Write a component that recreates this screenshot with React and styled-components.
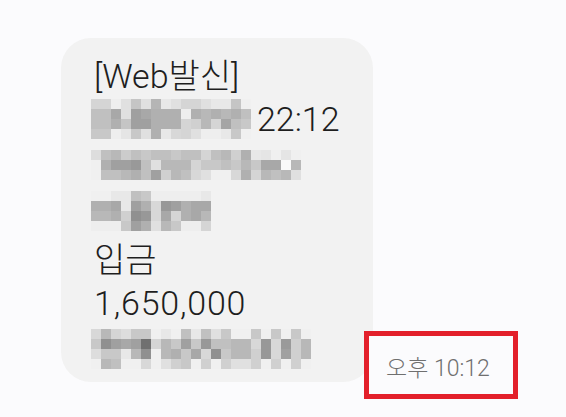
import React from "react";
import styled, { createGlobalStyle } from "styled-components";

const Global = createGlobalStyle`
  html, body { margin: 0; padding: 0; background: #fbfbfd; }
  body { font-family: "Roboto", "Noto Sans CJK KR", sans-serif; }
`;

const Page = styled.div`
  width: 566px;
  height: 417px;
  box-sizing: border-box;
  padding: 38px 0 0 61px;
  background: #fbfbfd;
  overflow: hidden;
`;

const Row = styled.div`
  display: flex;
  align-items: flex-end;
`;

const Bubble = styled.div`
  width: 312px;
  box-sizing: border-box;
  padding: 12px 0 10px 33px;
  background: #f2f2f2;
  border-radius: 30px;
  display: flex;
  flex-direction: column;
`;

const Line = styled.div`
  height: 46px;
  display: flex;
  align-items: center;
  gap: 6px;
  font-size: 34px;
  font-weight: 300;
  color: #1e1e1e;
  white-space: nowrap;
  letter-spacing: ${(p) => p.$track || "0px"};
`;

const Mosaic = styled.div`
  display: grid;
  grid-template-columns: repeat(${(p) => p.$cols}, 10px);
  grid-auto-rows: 10px;
  margin-left: -3px;
`;

const Cell = styled.div`
  background: ${(p) => (p.$g ? `#${p.$g}${p.$g}${p.$g}` : "transparent")};
`;

const TimeBox = styled.div`
  position: relative;
  margin-left: -9px;
  margin-bottom: -17px;
  width: 154px;
  height: 68px;
  box-sizing: border-box;
  border: 5px solid #e3202b;
  background: #fbfbfd;
  display: flex;
  align-items: center;
  padding-left: 17px;
  padding-top: 2px;
  font-size: 23px;
  font-weight: 300;
  color: #6f6f6f;
  white-space: nowrap;
`;

const m2 = [
  "d5 d5 ee e0 c5 e0 b5 e8 e0 d5 d5 e0 e8 e8 c5 f0",
  "c0 c0 a8 e0 a0 a8 b0 b0 b0 ee b0 b8 b0 b8 b0 c0",
  "c0 c0 b0 c5 a0 a0 b0 b0 b0 d5 d0 b8 d5 a5 c0 c8",
  "c8 c8 ee e5 c8 e0 b0 e8 d8 d5 e0 ee ee e8 c8 f0",
];
const m3 = [
  "dd c0 b8 cc c0 c8 c0 c0 c8 c0 c0 d5 c0 b8 d0 b0 e8 e5 f0 e5 f0",
  "f0 b0 a0 a0 99 c0 e0 b8 b8 b8 d5 c8 c8 c0 c8 b8 c8 a8 a8 fa b8",
  "f0 c0 c0 b8 b0 c0 a0 d0 b8 c0 d8 e0 f0 f0 d8 b0 d5 b8 c0 b8 e0",
];
const m4 = [
  "f0 f0 e8 e8 c0 c8 ee ee ee ee ee e8",
  "b0 b0 a8 e8 a0 b0 d8 98 a0 b0 a8 a8",
  "b8 b8 b0 d0 90 98 d8 a8 d5 b0 a8 b8",
  "ee ee ee c8 a0 b0 e0 b8 c8 ee ee d5",
];
const m7 = [
  "d8 b8 d5 dd c8 c8 f0 e8 f0 c0 e8 c0 e0 c8 f0 f0 c8 f0 c8 f0 c8 f0",
  "c8 90 a0 a8 a0 70 d5 b8 c8 a0 c8 98 c0 c0 b8 b8 d8 98 d8 9a d0 b8",
  "dd c8 c8 e8 b8 90 f0 b8 b0 c8 a8 d8 90 c8 b8 b8 d0 98 d8 a0 d0 b8",
  "f0 b8 c0 f0 f0 d8 f0 e0 d0 c8 f0 d0 f0 d0 e0 e0 d0 f0 d0 f0 d0 f0",
];

function Pixelated({ rows }) {
  const grid = rows.map((r) => r.split(" "));
  const cols = grid[0].length;
  return (
    <Mosaic $cols={cols}>
      {grid.flatMap((r, i) =>
        r.map((g, j) => <Cell key={`${i}-${j}`} $g={g} />)
      )}
    </Mosaic>
  );
}

export default function App() {
  return (
    <>
      <Global />
      <Page>
        <Row>
          <Bubble>
            <Line>[Web발신]</Line>
            <Line>
              <Pixelated rows={m2} />
              <span>22:12</span>
            </Line>
            <Line>
              <Pixelated rows={m3} />
            </Line>
            <Line>
              <Pixelated rows={m4} />
            </Line>
            <Line>입금</Line>
            <Line $track="0.8px">1,650,000</Line>
            <Line>
              <Pixelated rows={m7} />
            </Line>
          </Bubble>
          <TimeBox>오후 10:12</TimeBox>
        </Row>
      </Page>
    </>
  );
}
